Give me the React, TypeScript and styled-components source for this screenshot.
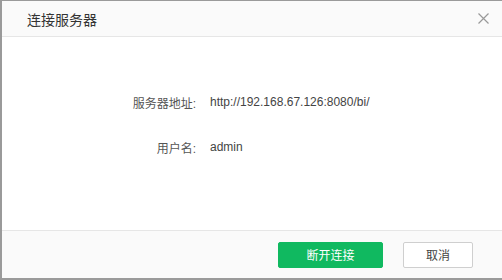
import styled, { createGlobalStyle } from 'styled-components';

const GlobalStyle = createGlobalStyle`
  html, body {
    margin: 0;
    padding: 0;
    background: #9a9a9a;
  }
  body {
    font-family: "Liberation Sans", "Noto Sans CJK SC", sans-serif;
  }
`;

const Backdrop = styled.div`
  width: 502px;
  height: 280px;
  box-sizing: border-box;
  padding: 1px 0 2px 2px; /* grey edge of the page behind the dialog */
  background: #9a9a9a;
`;

const Dialog = styled.div`
  display: flex;
  flex-direction: column;
  width: 500px;
  height: 277px;
  background: #fff;
`;

const Header = styled.div`
  display: flex;
  align-items: center;
  justify-content: space-between;
  height: 35px;
  padding: 0 13px 0 25px;
  background: #fafafa;
  border-bottom: 1px solid #e6e6e6;
`;

const Title = styled.span`
  font-size: 14px;
  color: #333;
`;

const CloseButton = styled.button`
  display: flex;
  align-items: center;
  justify-content: center;
  width: 12px;
  height: 12px;
  padding: 0;
  border: none;
  background: none;
  cursor: pointer;
`;

const Body = styled.div`
  flex: 1;
  display: grid;
  grid-template-columns: 194px 1fr;
  grid-auto-rows: 20px;
  column-gap: 14px;
  row-gap: 25px;
  align-content: start;
  align-items: center;
  padding-top: 55px;
  font-size: 12px;
`;

const Label = styled.span`
  text-align: right;
  color: #555;
`;

const Value = styled.span`
  color: #444;
`;

const Footer = styled.div`
  display: flex;
  justify-content: flex-end;
  align-items: center;
  gap: 20px;
  height: 47px;
  padding: 0 29px 0 0;
  background: #fafafa;
  border-top: 1px solid #e6e6e6;
`;

const Button = styled.button<{ $primary?: boolean }>`
  height: 26px;
  width: ${p => (p.$primary ? '105px' : '70px')};
  padding: 0;
  font-family: "Liberation Sans", "Noto Sans CJK SC", sans-serif;
  font-size: 12px;
  border-radius: 2px;
  cursor: pointer;
  color: ${p => (p.$primary ? '#fff' : '#444')};
  background: ${p => (p.$primary ? '#10b960' : '#fff')};
  border: 1px solid ${p => (p.$primary ? '#10b960' : '#cfcfcf')};
`;

const App = () => {
  return (
    <>
      <GlobalStyle />
      <Backdrop>
        <Dialog>
          <Header>
            <Title>连接服务器</Title>
            <CloseButton aria-label="关闭">
              <svg width="11" height="11" viewBox="0 0 11 11">
                <path d="M0.5 0.5L10.5 10.5M10.5 0.5L0.5 10.5" stroke="#999" strokeWidth="1.2" />
              </svg>
            </CloseButton>
          </Header>
          <Body>
            <Label>服务器地址:</Label>
            <Value>http://192.168.67.126:8080/bi/</Value>
            <Label>用户名:</Label>
            <Value>admin</Value>
          </Body>
          <Footer>
            <Button $primary>断开连接</Button>
            <Button>取消</Button>
          </Footer>
        </Dialog>
      </Backdrop>
    </>
  );
};

export default App;
